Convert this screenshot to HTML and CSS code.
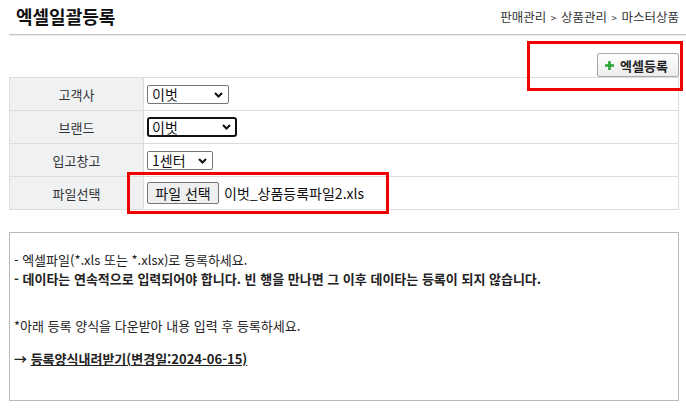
FILE: index.html
```html
<!DOCTYPE html>
<html lang="ko">
<head>
<meta charset="utf-8">
<link rel="stylesheet" href="styles.css">
</head>
<body>
<div class="page">
  <div class="header">
    <h1 class="title">엑셀일괄등록</h1>
    <div class="crumb">판매관리 <span class="gt">&gt;</span> 상품관리 <span class="gt">&gt;</span> 마스터상품</div>
  </div>

  <div class="toolbar">
    <button class="btn-add"><svg class="plus" width="9" height="9" viewBox="0 0 9 9"><path d="M3.2 0h2.6v3.2H9v2.6H5.8V9H3.2V5.8H0V3.2h3.2z" fill="#2aa33a"/></svg>엑셀등록</button>
    <div class="mark mark-top"></div>
  </div>

  <table class="form">
    <tr>
      <th>고객사</th>
      <td><span class="sel w82"><span class="val">이벗</span><svg class="chev" width="9" height="6" viewBox="0 0 9 6"><path d="M1 1l3.5 3.5L8 1" fill="none" stroke="#111" stroke-width="2"/></svg></span></td>
    </tr>
    <tr>
      <th>브랜드</th>
      <td><span class="sel w90 focus"><span class="val">이벗</span><svg class="chev" width="9" height="6" viewBox="0 0 9 6"><path d="M1 1l3.5 3.5L8 1" fill="none" stroke="#111" stroke-width="2"/></svg></span></td>
    </tr>
    <tr>
      <th>입고창고</th>
      <td><span class="sel w66"><span class="val">1센터</span><svg class="chev" width="9" height="6" viewBox="0 0 9 6"><path d="M1 1l3.5 3.5L8 1" fill="none" stroke="#111" stroke-width="2"/></svg></span></td>
    </tr>
    <tr>
      <th>파일선택</th>
      <td class="filecell"><span class="filebtn">파일 선택</span><span class="fname">이벗_상품등록파일2.xls</span><div class="mark mark-file"></div></td>
    </tr>
  </table>

  <div class="notice">
    <p class="n1">- 엑셀파일(*.xls 또는 *.xlsx)로 등록하세요.</p>
    <p class="n2">- 데이타는 연속적으로 입력되어야 합니다. 빈 행을 만나면 그 이후 데이타는 등록이 되지 않습니다.</p>
    <p class="n3">*아래 등록 양식을 다운받아 내용 입력 후 등록하세요.</p>
    <p class="n4">→ <a class="dl">등록양식내려받기(변경일:2024-06-15)</a></p>
  </div>
</div>
</body>
</html>
```

FILE: styles.css
```css
* { box-sizing: border-box; }
html, body { margin: 0; padding: 0; background: #fff; }
body {
  font-family: "Noto Sans CJK KR", "Noto Sans", sans-serif;
  color: #222;
  font-size: 12px;
}
.page {
  width: 686px;
  padding-left: 9px;
}
.header {
  display: flex;
  justify-content: space-between;
  align-items: center;
  height: 35px;
  padding: 0 7px 2px 7px;
  border-bottom: 1px solid #c6c6c6;
  box-shadow: 0 1px 0 #ececec;
}
.title {
  margin: 0;
  font-size: 18px;
  font-weight: bold;
  color: #111;
  line-height: 20px;
}
.crumb {
  font-size: 12.5px;
  color: #333;
}
.gt { font-size: 10px; margin: 0 1px; }
.toolbar {
  position: relative;
  display: flex;
  justify-content: flex-end;
  align-items: flex-start;
  height: 42px;
  padding-top: 18px;
  width: 670px;
}
.btn-add {
  display: flex;
  align-items: center;
  gap: 6px;
  height: 24px;
  width: 82px;
  padding: 0 0 0 7px;
  border: 1px solid #a9a9a9;
  border-radius: 2px;
  background: linear-gradient(#ffffff, #ececec);
  font-family: inherit;
  font-size: 13px;
  font-weight: bold;
  color: #222;
}
.mark {
  position: absolute;
  border: 3px solid #f20000;
  pointer-events: none;
}
.mark-top {
  left: 518px;
  top: 6px;
  width: 156px;
  height: 50px;
}
.form {
  width: 670px;
  border-collapse: collapse;
  border: 1px solid #dcdcdc;
}
.form th, .form td {
  border: 1px solid #dcdcdc;
  height: 33px;
  padding: 0;
}
.form th {
  width: 134px;
  background: #f0f1f3;
  font-weight: normal;
  font-size: 13px;
  color: #333;
}
.form td { padding-left: 3px; }
.sel {
  position: relative;
  display: flex;
  align-items: center;
  height: 19px;
  border: 1px solid #767676;
  border-radius: 2px;
  padding-left: 4px;
  font-size: 14px;
  color: #111;
  background: #fff;
}
.sel.focus {
  height: 20px;
  border: 2px solid #111;
  border-radius: 3px;
  padding-left: 3px;
}
.w82 { width: 82px; }
.w90 { width: 90px; }
.w66 { width: 66px; }
.chev {
  position: absolute;
  right: 5px;
  top: 6px;
}
.focus .chev { top: 5px; right: 4px; }
.filecell { position: relative; }
.filebtn {
  display: inline-flex;
  align-items: center;
  justify-content: center;
  width: 72px;
  height: 22px;
  border: 1px solid #767676;
  border-radius: 2px;
  background: #efefef;
  font-size: 14px;
  color: #111;
  vertical-align: middle;
}
.fname {
  font-size: 14px;
  color: #111;
  margin-left: 5px;
  vertical-align: middle;
}
.mark-file {
  left: -17px;
  top: -5px;
  width: 262px;
  height: 42px;
}
.notice {
  margin-top: 22px;
  width: 670px;
  height: 169px;
  border: 1px solid #b9b9b9;
  padding: 17px 0 0 4px;
  font-size: 13px;
  color: #222;
}
.notice p { margin: 0; line-height: 19px; }
.n2 { font-weight: bold; }
.n3 { margin-top: 28px !important; }
.n4 { margin-top: 14px !important; font-weight: bold; }
.dl { text-decoration: underline; color: #222; }
```
